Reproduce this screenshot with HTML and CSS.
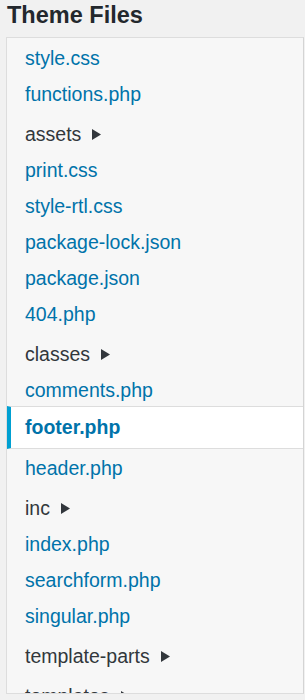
FILE: index.html
```html
<!DOCTYPE html>
<html lang="en">

<head>
    <meta charset="UTF-8">
    <meta name="viewport" content="width=device-width, initial-scale=1.0">
    <title>Theme Files</title>
    <link rel="stylesheet" href="styles.css">
</head>

<body>
    <div class="theme-files">
        <h2>Theme Files</h2>
        <div class="tree-box">
            <ul class="tree">
                <li class="file"><a href="#">style.css</a></li>
                <li class="file"><a href="#">functions.php</a></li>
                <li class="folder"><span>assets</span><svg class="arrow" width="9" height="11" viewBox="0 0 9 11"><path d="M0 0 L9 5.5 L0 11 Z" /></svg></li>
                <li class="file"><a href="#">print.css</a></li>
                <li class="file"><a href="#">style-rtl.css</a></li>
                <li class="file"><a href="#">package-lock.json</a></li>
                <li class="file"><a href="#">package.json</a></li>
                <li class="file"><a href="#">404.php</a></li>
                <li class="folder"><span>classes</span><svg class="arrow" width="9" height="11" viewBox="0 0 9 11"><path d="M0 0 L9 5.5 L0 11 Z" /></svg></li>
                <li class="file"><a href="#">comments.php</a></li>
                <li class="file current"><a href="#">footer.php</a></li>
                <li class="file"><a href="#">header.php</a></li>
                <li class="folder"><span>inc</span><svg class="arrow" width="9" height="11" viewBox="0 0 9 11"><path d="M0 0 L9 5.5 L0 11 Z" /></svg></li>
                <li class="file"><a href="#">index.php</a></li>
                <li class="file"><a href="#">searchform.php</a></li>
                <li class="file"><a href="#">singular.php</a></li>
                <li class="folder"><span>template-parts</span><svg class="arrow" width="9" height="11" viewBox="0 0 9 11"><path d="M0 0 L9 5.5 L0 11 Z" /></svg></li>
                <li class="folder"><span>templates</span><svg class="arrow" width="9" height="11" viewBox="0 0 9 11"><path d="M0 0 L9 5.5 L0 11 Z" /></svg></li>
            </ul>
        </div>
    </div>
</body>

</html>
```

FILE: styles.css
```css
body {
    margin: 0;
    background-color: #f1f1f1;
    font-family: "Liberation Sans", Arial, sans-serif;
    color: #32373c;
}

.theme-files {
    padding-left: 6px;
}

h2 {
    margin: 0;
    height: 37px;
    padding-left: 1px;
    font-size: 23.5px;
    line-height: 30px;
    font-weight: bold;
    color: #23282d;
}

.tree-box {
    height: 657px;
    box-sizing: border-box;
    border: 1px solid #dddddd;
    border-right-color: #d4d4d4;
    margin-right: 1px;
    background-color: #f7f7f7;
    overflow: hidden;
}

.tree {
    list-style: none;
    margin: 0;
    padding: 2px 0 0;
}

.tree li {
    display: flex;
    align-items: center;
    padding-left: 18px;
    font-size: 19.5px;
}

.tree .file {
    height: 36px;
}

.tree .folder {
    height: 40px;
    padding-top: 4px;
    box-sizing: border-box;
    color: #32373c;
}

.tree a {
    color: #0073aa;
    text-decoration: none;
}

.arrow {
    margin-left: 11px;
    fill: #32373c;
}

.tree .current {
    height: 43px;
    margin: -2px 0 1px;
    box-sizing: border-box;
    padding-left: 14px;
    background-color: #ffffff;
    border-top: 1px solid #dddddd;
    border-bottom: 1px solid #dddddd;
    border-left: 4px solid #00a0d2;
}

.tree .current a {
    font-weight: bold;
}
```
